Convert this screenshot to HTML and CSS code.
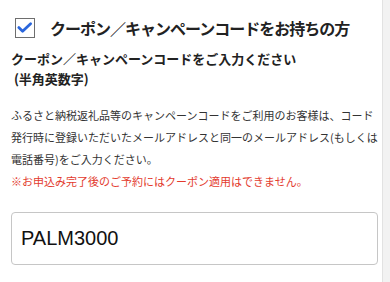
FILE: index.html
```html
<!DOCTYPE html>
<html lang="ja">
<head>
<meta charset="utf-8">
<link rel="stylesheet" href="styles.css">
</head>
<body>
<div class="page">
  <main class="main">
    <label class="check-row">
      <span class="box">
        <svg width="18" height="18" viewBox="0 0 18 18"><path d="M2.8 8.6 L6.6 12.2 L14.6 4.8" fill="none" stroke="#2a66dc" stroke-width="2.8" stroke-linecap="round" stroke-linejoin="round"/></svg>
      </span>
      <span class="title">クーポン／キャンペーンコードをお持ちの方</span>
    </label>
    <p class="subtitle">クーポン／キャンペーンコードをご入力ください<br>&nbsp;(半角英数字)</p>
    <p class="desc">ふるさと納税返礼品等のキャンペーンコードをご利用のお客様は、コード発行時に登録いただいたメールアドレスと同一のメールアドレス(もしくは電話番号)をご入力ください。<br><span class="warn">※お申込み完了後のご予約にはクーポン適用はできません。</span></p>
    <div class="field">PALM3000</div>
  </main>
  <div class="side"></div>
</div>
</body>
</html>
```
FILE: styles.css
```css
html, body {
  margin: 0;
  padding: 0;
  background: #fff;
}
.page {
  display: flex;
  width: 390px;
  height: 282px;
  overflow: hidden;
  font-family: "Noto Sans CJK JP", "Noto Sans", sans-serif;
  color: #222;
}
.main {
  flex: 1;
  padding: 18px 4px 0 11px;
  min-width: 0;
}
.side {
  width: 7px;
  background: #f2f2f2;
  border-left: 1px solid #e2e2e2;
}
.check-row {
  display: flex;
  align-items: center;
  gap: 15px;
  padding-left: 4px;
}
.box {
  box-sizing: border-box;
  width: 20px;
  height: 20px;
  border: 1.5px solid #6e6e6e;
  display: flex;
  align-items: center;
  justify-content: center;
  flex-shrink: 0;
}
.box svg {
  display: block;
}
.title {
  font-size: 16px;
  line-height: 20px;
  font-weight: bold;
  letter-spacing: -1px;
  white-space: nowrap;
}
.subtitle {
  margin: 11px 0 0;
  font-size: 13px;
  line-height: 20px;
  font-weight: bold;
  color: #222;
}
.desc {
  margin: 15px 0 0;
  font-size: 11px;
  line-height: 22px;
  color: #333;
}
.warn {
  color: #e33b2e;
}
.field {
  box-sizing: border-box;
  margin-top: 20px;
  height: 53px;
  border: 1px solid #c6c6c6;
  border-radius: 4px;
  padding: 0 9px;
  display: flex;
  align-items: center;
  font-family: "Liberation Sans", Arial, sans-serif;
  font-size: 20px;
  color: #111;
}
```
